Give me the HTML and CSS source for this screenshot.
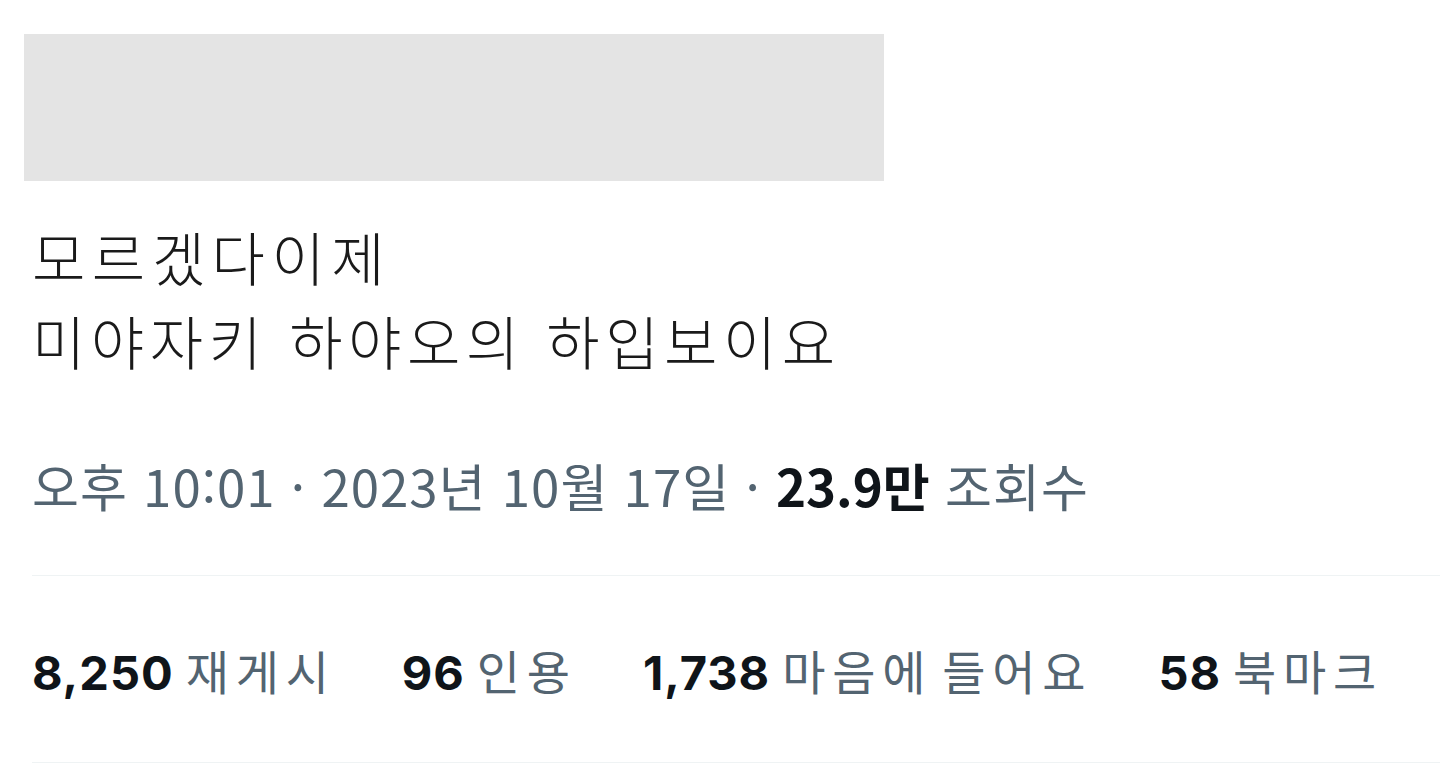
FILE: index.html
```html
<!DOCTYPE html>
<html lang="ko">
<head>
    <meta charset="UTF-8">
    <meta name="viewport" content="width=device-width, initial-scale=1.0">
    <title>트윗</title>
    <link rel="stylesheet" href="styles.css">
</head>
<body>
    <div class="tweet">
        <div class="media-placeholder"></div>
        <div class="tweet-text">
            <p>모르겠다이제</p>
            <p>미야자키 하야오의 하입보이요</p>
        </div>
        <div class="meta">
            <span>오후 10:01</span> · <span>2023년 10월 17일</span> · <b>23.9만</b> 조회수
        </div>
        <div class="stats">
            <div class="stat"><b>8,250</b><span>재게시</span></div>
            <div class="stat"><b>96</b><span>인용</span></div>
            <div class="stat"><b>1,738</b><span>마음에 들어요</span></div>
            <div class="stat"><b>58</b><span>북마크</span></div>
        </div>
    </div>
</body>
</html>
```

FILE: styles.css
```css
body {
    margin: 0;
    background-color: #fff;
    font-family: "Noto Sans CJK KR", "Noto Sans", sans-serif;
    color: #0f1419;
}
.tweet {
    padding: 34px 0 0 32px;
}
.media-placeholder {
    width: 860px;
    height: 147px;
    margin-left: -8px;
    background-color: #e4e4e4;
}
.tweet-text {
    margin-top: 33px;
    font-size: 58px;
    line-height: 84px;
    font-weight: 300;
    letter-spacing: 5.5px;
    color: #1a1a1a;
}
.tweet-text p {
    margin: 0;
}
.tweet-text p:first-child {
    letter-spacing: 6.5px;
}
.meta {
    margin-top: 66px;
    font-size: 51px;
    line-height: 74px;
    letter-spacing: 1px;
    color: #536471;
}
.meta b {
    color: #0f1419;
    font-weight: 700;
    letter-spacing: 0;
}
.stats {
    margin-top: 53px;
    height: 186px;
    display: flex;
    align-items: center;
    gap: 66px;
    border-top: 1px solid #eff3f4;
    border-bottom: 1px solid #eff3f4;
    font-size: 47px;
    color: #536471;
}
.stat {
    display: flex;
    align-items: baseline;
    gap: 12px;
}
.stat b {
    font-family: Inter, "Noto Sans CJK KR", sans-serif;
    color: #0f1419;
    font-weight: 700;
    letter-spacing: 1px;
}
.stat span {
    letter-spacing: 6.8px;
    word-spacing: -10px;
}
```
